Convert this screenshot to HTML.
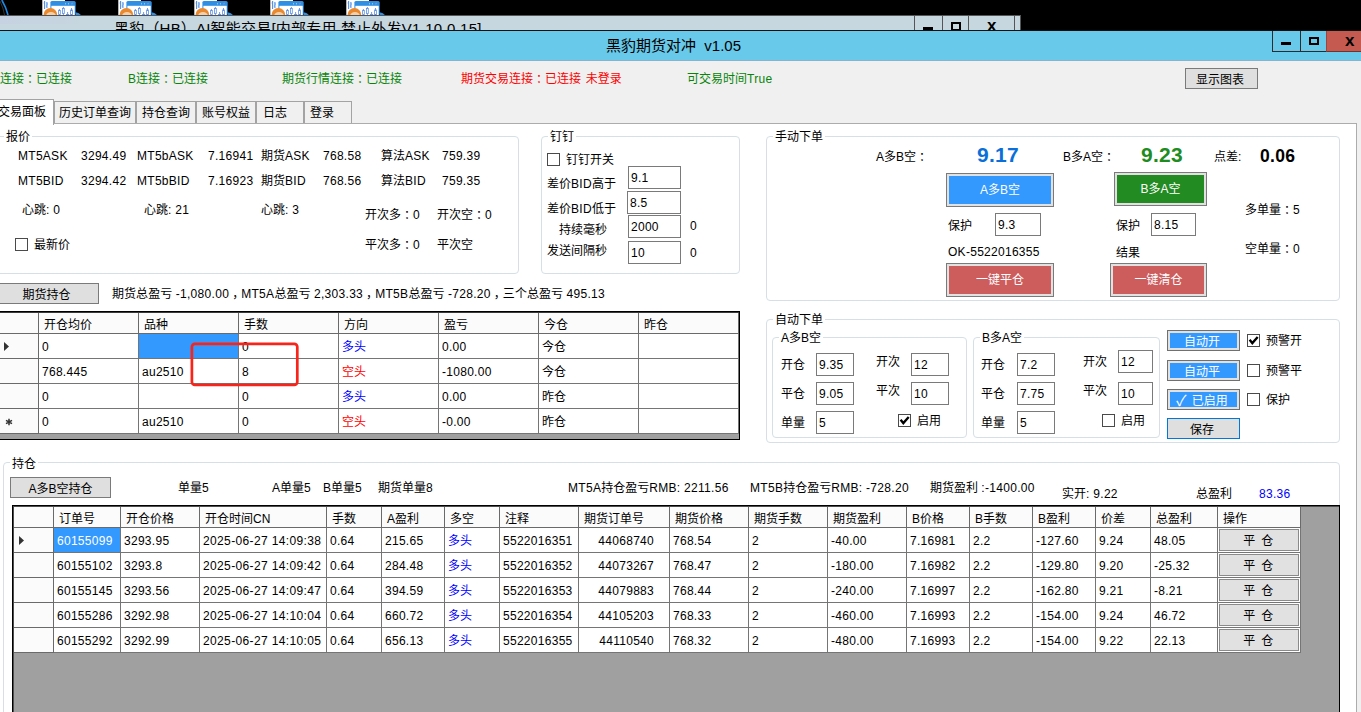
<!DOCTYPE html><html lang="zh"><head><meta charset="utf-8"><title>黑豹期货对冲 v1.05</title><style>
*{box-sizing:border-box;margin:0;padding:0}
html,body{width:1361px;height:712px;overflow:hidden;background:#000}
body{position:relative;font-family:"Liberation Sans","Noto Sans CJK SC",sans-serif;font-size:12px;color:#000;line-height:16px}
.a{position:absolute}
.t{position:absolute;white-space:nowrap;height:19px;line-height:19px}
.g{color:#088508}
.r{color:#ff0000}
.bl{color:#0000ff}
.gb{position:absolute;border:1px solid #d5dfe5;border-radius:4px}
.gl{position:absolute;background:#fff;padding:0 2px;white-space:nowrap;height:16px;line-height:19px}
.tb{position:absolute;border:1px solid #7a7a7a;background:#fff;height:22px;line-height:21px;padding-left:2px;padding-top:1px;white-space:nowrap;overflow:hidden}
.cb{position:absolute;width:13px;height:13px;border:1px solid #4a4a4a;background:#fff}
.btn{position:absolute;border:1px solid #7a7a7a;background:#dfdfdf;text-align:center;white-space:nowrap}
.tab{position:absolute;top:101px;height:22px;border:1px solid #a3a3a3;border-bottom:none;background:#f0f0f0;line-height:23px;text-align:center;white-space:nowrap}
.n{letter-spacing:0.3px}
.cm{position:relative;left:3px}
.c{font-family:"Noto Sans CJK TC",sans-serif;line-height:0;position:relative;top:1px}
.cell{position:absolute;background:#fff;border-right:1px solid #757575;border-bottom:1px solid #757575;white-space:nowrap;overflow:hidden;padding-left:3px}
.hc{position:absolute;background:#fbfbfb;border-right:1px solid #6a6a6a;border-bottom:1px solid #6a6a6a;white-space:nowrap;overflow:hidden;padding-left:3px}
</style></head><body>
<svg class="a" style="left:42px;top:0" width="40" height="15" viewBox="0 0 40 15"><rect x="0.3" y="0" width="22.7" height="15" fill="#fff"/><path d="M2.6 1v8M4.9 2v6" stroke="#4d8fe6" stroke-width="1.1" fill="none"/><path d="M1.6 3h1M4.9 4h1M3.9 6h1" stroke="#4d8fe6" stroke-width="0.8" fill="none"/><rect x="8.4" y="1.1" width="25.3" height="14" rx="1.5" fill="#2e8fe3"/><rect x="9.4" y="5.8" width="23.3" height="10" fill="#fff"/><path d="M17.4 9v6M21.4 7v8M25.6 12v3M29.5 8v7" stroke="#5a8eea" stroke-width="0.9" fill="none"/><rect x="16.6" y="10.5" width="1.7" height="4" fill="#fff" stroke="#5a8eea" stroke-width="0.8"/><rect x="20.5" y="8.5" width="1.8" height="5" fill="#fff" stroke="#5a8eea" stroke-width="0.8"/><rect x="28.6" y="10" width="1.8" height="5" fill="#fff" stroke="#5a8eea" stroke-width="0.8"/><path d="M24 14.5h3.2" stroke="#5a8eea" stroke-width="0.9"/><circle cx="8.4" cy="14.8" r="6.8" fill="#e8892f"/><ellipse cx="9" cy="16.5" rx="5" ry="4.5" fill="#f7cfa6"/><path d="M23 4.3l1-1.6v1.6zM26 4.3l1-1.6v1.6z" fill="#fff" opacity="0.9"/><path d="M29.3 4.3l1-1.8v1.8z" fill="#f9a" /><path d="M33.7 15v-2.5q3 -0.5 5.2 2.5z" fill="#2e8fe3"/></svg>
<svg class="a" style="left:118px;top:0" width="40" height="15" viewBox="0 0 40 15"><rect x="0.3" y="0" width="22.7" height="15" fill="#fff"/><path d="M2.6 1v8M4.9 2v6" stroke="#4d8fe6" stroke-width="1.1" fill="none"/><path d="M1.6 3h1M4.9 4h1M3.9 6h1" stroke="#4d8fe6" stroke-width="0.8" fill="none"/><rect x="8.4" y="1.1" width="25.3" height="14" rx="1.5" fill="#2e8fe3"/><rect x="9.4" y="5.8" width="23.3" height="10" fill="#fff"/><path d="M17.4 9v6M21.4 7v8M25.6 12v3M29.5 8v7" stroke="#5a8eea" stroke-width="0.9" fill="none"/><rect x="16.6" y="10.5" width="1.7" height="4" fill="#fff" stroke="#5a8eea" stroke-width="0.8"/><rect x="20.5" y="8.5" width="1.8" height="5" fill="#fff" stroke="#5a8eea" stroke-width="0.8"/><rect x="28.6" y="10" width="1.8" height="5" fill="#fff" stroke="#5a8eea" stroke-width="0.8"/><path d="M24 14.5h3.2" stroke="#5a8eea" stroke-width="0.9"/><circle cx="8.4" cy="14.8" r="6.8" fill="#e8892f"/><ellipse cx="9" cy="16.5" rx="5" ry="4.5" fill="#f7cfa6"/><path d="M23 4.3l1-1.6v1.6zM26 4.3l1-1.6v1.6z" fill="#fff" opacity="0.9"/><path d="M29.3 4.3l1-1.8v1.8z" fill="#f9a" /><path d="M33.7 15v-2.5q3 -0.5 5.2 2.5z" fill="#2e8fe3"/></svg>
<svg class="a" style="left:194px;top:0" width="40" height="15" viewBox="0 0 40 15"><rect x="0.3" y="0" width="22.7" height="15" fill="#fff"/><path d="M2.6 1v8M4.9 2v6" stroke="#4d8fe6" stroke-width="1.1" fill="none"/><path d="M1.6 3h1M4.9 4h1M3.9 6h1" stroke="#4d8fe6" stroke-width="0.8" fill="none"/><rect x="8.4" y="1.1" width="25.3" height="14" rx="1.5" fill="#2e8fe3"/><rect x="9.4" y="5.8" width="23.3" height="10" fill="#fff"/><path d="M17.4 9v6M21.4 7v8M25.6 12v3M29.5 8v7" stroke="#5a8eea" stroke-width="0.9" fill="none"/><rect x="16.6" y="10.5" width="1.7" height="4" fill="#fff" stroke="#5a8eea" stroke-width="0.8"/><rect x="20.5" y="8.5" width="1.8" height="5" fill="#fff" stroke="#5a8eea" stroke-width="0.8"/><rect x="28.6" y="10" width="1.8" height="5" fill="#fff" stroke="#5a8eea" stroke-width="0.8"/><path d="M24 14.5h3.2" stroke="#5a8eea" stroke-width="0.9"/><circle cx="8.4" cy="14.8" r="6.8" fill="#e8892f"/><ellipse cx="9" cy="16.5" rx="5" ry="4.5" fill="#f7cfa6"/><path d="M23 4.3l1-1.6v1.6zM26 4.3l1-1.6v1.6z" fill="#fff" opacity="0.9"/><path d="M29.3 4.3l1-1.8v1.8z" fill="#f9a" /><path d="M33.7 15v-2.5q3 -0.5 5.2 2.5z" fill="#2e8fe3"/></svg>
<svg class="a" style="left:270px;top:0" width="40" height="15" viewBox="0 0 40 15"><rect x="0.3" y="0" width="22.7" height="15" fill="#fff"/><path d="M2.6 1v8M4.9 2v6" stroke="#4d8fe6" stroke-width="1.1" fill="none"/><path d="M1.6 3h1M4.9 4h1M3.9 6h1" stroke="#4d8fe6" stroke-width="0.8" fill="none"/><rect x="8.4" y="1.1" width="25.3" height="14" rx="1.5" fill="#2e8fe3"/><rect x="9.4" y="5.8" width="23.3" height="10" fill="#fff"/><path d="M17.4 9v6M21.4 7v8M25.6 12v3M29.5 8v7" stroke="#5a8eea" stroke-width="0.9" fill="none"/><rect x="16.6" y="10.5" width="1.7" height="4" fill="#fff" stroke="#5a8eea" stroke-width="0.8"/><rect x="20.5" y="8.5" width="1.8" height="5" fill="#fff" stroke="#5a8eea" stroke-width="0.8"/><rect x="28.6" y="10" width="1.8" height="5" fill="#fff" stroke="#5a8eea" stroke-width="0.8"/><path d="M24 14.5h3.2" stroke="#5a8eea" stroke-width="0.9"/><circle cx="8.4" cy="14.8" r="6.8" fill="#e8892f"/><ellipse cx="9" cy="16.5" rx="5" ry="4.5" fill="#f7cfa6"/><path d="M23 4.3l1-1.6v1.6zM26 4.3l1-1.6v1.6z" fill="#fff" opacity="0.9"/><path d="M29.3 4.3l1-1.8v1.8z" fill="#f9a" /><path d="M33.7 15v-2.5q3 -0.5 5.2 2.5z" fill="#2e8fe3"/></svg>
<svg class="a" style="left:346px;top:0" width="40" height="15" viewBox="0 0 40 15"><rect x="0.3" y="0" width="22.7" height="15" fill="#fff"/><path d="M2.6 1v8M4.9 2v6" stroke="#4d8fe6" stroke-width="1.1" fill="none"/><path d="M1.6 3h1M4.9 4h1M3.9 6h1" stroke="#4d8fe6" stroke-width="0.8" fill="none"/><rect x="8.4" y="1.1" width="25.3" height="14" rx="1.5" fill="#2e8fe3"/><rect x="9.4" y="5.8" width="23.3" height="10" fill="#fff"/><path d="M17.4 9v6M21.4 7v8M25.6 12v3M29.5 8v7" stroke="#5a8eea" stroke-width="0.9" fill="none"/><rect x="16.6" y="10.5" width="1.7" height="4" fill="#fff" stroke="#5a8eea" stroke-width="0.8"/><rect x="20.5" y="8.5" width="1.8" height="5" fill="#fff" stroke="#5a8eea" stroke-width="0.8"/><rect x="28.6" y="10" width="1.8" height="5" fill="#fff" stroke="#5a8eea" stroke-width="0.8"/><path d="M24 14.5h3.2" stroke="#5a8eea" stroke-width="0.9"/><circle cx="8.4" cy="14.8" r="6.8" fill="#e8892f"/><ellipse cx="9" cy="16.5" rx="5" ry="4.5" fill="#f7cfa6"/><path d="M23 4.3l1-1.6v1.6zM26 4.3l1-1.6v1.6z" fill="#fff" opacity="0.9"/><path d="M29.3 4.3l1-1.8v1.8z" fill="#f9a" /><path d="M33.7 15v-2.5q3 -0.5 5.2 2.5z" fill="#2e8fe3"/></svg>
<svg class="a" style="left:0;top:0" width="12" height="15"><path d="M1.8 0 Q6 7 8 15" stroke="#1e8ae6" stroke-width="1.6" fill="none"/><path d="M0 1 Q3.5 8 4.5 15" stroke="#555" stroke-width="0.6" fill="none"/></svg>
<div class="a" style="left:0;top:15px;width:1021px;height:16px;background:#c6d7df;border-top:1px solid #555;border-right:1px solid #555;overflow:hidden">
<div class="a" style="left:0;top:0;width:80px;height:8px;background:linear-gradient(90deg,#c6d2e1,#c6d4e0 80%,#c6d7df)"></div>
<div class="t" style="left:114px;top:3px;font-size:15px;line-height:20px;height:20px;letter-spacing:0.2px;color:#000">黑豹（HB）AI智能交易[内部专用 禁止外发<span class="n">V1.10.0.15]</span></div>
<div class="a" style="left:914px;top:0;width:1px;height:20px;background:#555"></div>
<div class="a" style="left:942px;top:0;width:1px;height:20px;background:#555"></div>
<div class="a" style="left:968px;top:0;width:1px;height:20px;background:#555"></div>
<div class="a" style="left:1014px;top:0;width:1px;height:20px;background:#555"></div>
<div class="a" style="left:923px;top:11px;width:10px;height:4px;background:#000"></div>
<div class="a" style="left:951px;top:6px;width:10px;height:9px;border:2px solid #000"></div>
<div class="t" style="left:987px;top:1px;font-size:17px;font-weight:bold;line-height:18px;height:18px">x</div>
</div>
<div class="a" style="left:0;top:30px;width:1361px;height:31px;background:#68c9ea;border-top:1px solid #111"></div>
<div class="t" style="left:606px;top:36px;font-size:15px;line-height:20px;height:20px">黑豹期货对冲&nbsp; v1.05</div>
<div class="a" style="left:1272px;top:31px;width:29px;height:21px;border:1px solid #2b2b30;border-top:none"></div>
<div class="a" style="left:1300px;top:31px;width:27px;height:21px;border:1px solid #2b2b30;border-top:none"></div>
<div class="a" style="left:1326px;top:31px;width:35px;height:21px;background:#c55b50;border-bottom:1px solid #70332d;border-left:1px solid #9a463e"></div>
<div class="a" style="left:1281px;top:42px;width:10px;height:3px;background:#000"></div>
<div class="a" style="left:1309px;top:37px;width:10px;height:8px;border:2px solid #000"></div>
<div class="t" style="left:1345px;top:32px;font-size:17px;font-weight:bold;line-height:18px;height:18px">x</div>
<div class="a" style="left:0;top:60px;width:1361px;height:1px;background:#86b4cf"></div>
<div class="a" style="left:0;top:61px;width:1361px;height:651px;background:#f0f0f0"></div>
<div class="t g" style="left:-8px;top:70px">A连接<span class="c" lang="zh-TW">：</span>已连接</div>
<div class="t g" style="left:128px;top:70px">B连接<span class="c" lang="zh-TW">：</span>已连接</div>
<div class="t g" style="left:282px;top:70px">期货行情连接<span class="c" lang="zh-TW">：</span>已连接</div>
<div class="t r" style="left:461px;top:70px;word-spacing:1.5px">期货交易连接<span class="c" lang="zh-TW">：</span>已连接 未登录</div>
<div class="t g" style="left:687px;top:70px">可交易时间<span class="n">True</span></div>
<div class="btn" style="left:1185px;top:68px;width:73px;height:21px;line-height:23px;padding-right:3px">显示图表</div>
<div class="a" style="left:-1px;top:123px;width:1358px;height:600px;background:#fff;border:1px solid #acacac"></div>
<div class="tab" style="left:54px;width:82px">历史订单查询</div>
<div class="tab" style="left:136px;width:60px">持仓查询</div>
<div class="tab" style="left:196px;width:60px">账号权益</div>
<div class="tab" style="left:256px;width:48px;text-align:left;padding-left:6px">日志</div>
<div class="tab" style="left:304px;width:48px;text-align:left;padding-left:5px">登录</div>
<div class="tab" style="left:-12px;top:99px;width:66px;height:26px;background:#fff;line-height:25px;padding-left:9px;text-align:left">交易面板</div>
<div class="gb" style="left:-5px;top:136px;width:524px;height:138px"></div>
<div class="gl" style="left:4px;top:128px">报价</div>
<div class="t" style="letter-spacing:0.28px;left:18px;top:147px">MT5ASK</div>
<div class="t" style="letter-spacing:0.28px;left:81px;top:147px">3294.49</div>
<div class="t" style="letter-spacing:0.28px;left:137px;top:147px">MT5bASK</div>
<div class="t" style="letter-spacing:0.28px;left:208px;top:147px">7.16941</div>
<div class="t" style="left:261px;top:147px">期货<span class="n">ASK</span></div>
<div class="t" style="letter-spacing:0.28px;left:323px;top:147px">768.58</div>
<div class="t" style="left:381px;top:147px">算法<span class="n">ASK</span></div>
<div class="t" style="letter-spacing:0.28px;left:442px;top:147px">759.39</div>
<div class="t" style="letter-spacing:0.28px;left:18px;top:172px">MT5BID</div>
<div class="t" style="letter-spacing:0.28px;left:81px;top:172px">3294.42</div>
<div class="t" style="letter-spacing:0.28px;left:137px;top:172px">MT5bBID</div>
<div class="t" style="letter-spacing:0.28px;left:208px;top:172px">7.16923</div>
<div class="t" style="left:261px;top:172px">期货<span class="n">BID</span></div>
<div class="t" style="letter-spacing:0.28px;left:323px;top:172px">768.56</div>
<div class="t" style="left:381px;top:172px">算法<span class="n">BID</span></div>
<div class="t" style="letter-spacing:0.28px;left:442px;top:172px">759.35</div>
<div class="t" style="left:22px;top:201px">心跳<span class="n">: 0</span></div>
<div class="t" style="left:144px;top:201px">心跳<span class="n">: 21</span></div>
<div class="t" style="left:261px;top:201px">心跳<span class="n">: 3</span></div>
<div class="t" style="left:365px;top:206px">开次多<span class="c" lang="zh-TW">：</span>0</div>
<div class="t" style="left:437px;top:206px">开次空<span class="c" lang="zh-TW">：</span>0</div>
<div class="t" style="left:365px;top:236px">平次多<span class="c" lang="zh-TW">：</span>0</div>
<div class="t" style="left:437px;top:236px">平次空</div>
<div class="cb" style="left:15px;top:238px"></div>
<div class="t" style="left:34px;top:236px">最新价</div>
<div class="gb" style="left:541px;top:136px;width:199px;height:138px"></div>
<div class="gl" style="left:548px;top:128px">钉钉</div>
<div class="cb" style="left:547px;top:153px"></div>
<div class="t" style="left:566px;top:151px">钉钉开关</div>
<div class="t" style="left:547px;top:175px">差价<span class="n">BID</span>高于</div>
<div class="t" style="left:547px;top:200px">差价<span class="n">BID</span>低于</div>
<div class="t" style="left:559px;top:221px">持续毫秒</div>
<div class="t" style="left:547px;top:242px">发送间隔秒</div>
<div class="tb" style="letter-spacing:0.28px;left:628px;top:166px;width:53px;height:23px">9.1</div>
<div class="tb" style="letter-spacing:0.28px;left:627px;top:191px;width:54px;height:23px">8.5</div>
<div class="tb" style="letter-spacing:0.28px;left:628px;top:215px;width:53px;height:23px">2000</div>
<div class="tb" style="letter-spacing:0.28px;left:628px;top:241px;width:53px;height:23px">10</div>
<div class="t" style="left:690px;top:217px">0</div>
<div class="t" style="left:690px;top:244px">0</div>
<div class="btn" style="left:-6px;top:283px;width:105px;height:21px;line-height:23px">期货持仓</div>
<div class="t" style="left:112px;top:285px;letter-spacing:0.06px">期货总盈亏 <span class="n">-1,080.00</span><span class="cm">，</span><span class="n">MT5A</span>总盈亏 <span class="n">2,303.33</span><span class="cm">，</span><span class="n">MT5B</span>总盈亏 <span class="n">-728.20</span><span class="cm">，</span>三个总盈亏 <span class="n">495.13</span></div>
<div class="a" style="left:-1px;top:311px;width:741px;height:129px;background:#a0a0a0;border:1px solid #000;box-shadow:inset 0 1px 0 #3a3a3a"></div>
<div class="hc" style="left:0px;top:313px;width:39px;height:21px;line-height:24px;padding-left:5px"></div>
<div class="hc" style="left:39px;top:313px;width:100px;height:21px;line-height:24px;padding-left:5px">开仓均价</div>
<div class="hc" style="left:139px;top:313px;width:100px;height:21px;line-height:24px;padding-left:5px">品种</div>
<div class="hc" style="left:239px;top:313px;width:100px;height:21px;line-height:24px;padding-left:5px">手数</div>
<div class="hc" style="left:339px;top:313px;width:100px;height:21px;line-height:24px;padding-left:5px">方向</div>
<div class="hc" style="left:439px;top:313px;width:100px;height:21px;line-height:24px;padding-left:5px">盈亏</div>
<div class="hc" style="left:539px;top:313px;width:100px;height:21px;line-height:24px;padding-left:5px">今仓</div>
<div class="hc" style="left:639px;top:313px;width:100px;height:21px;line-height:24px;padding-left:5px">昨仓</div>
<div class="hc" style="left:0;top:334px;width:39px;height:25px"></div>
<div class="cell" style="left:39px;top:334px;width:100px;height:25px;line-height:26px">0</div>
<div class="cell" style="left:139px;top:334px;width:100px;height:25px;line-height:26px;background:#3399ff"></div>
<div class="cell" style="left:239px;top:334px;width:100px;height:25px;line-height:26px">0</div>
<div class="cell bl" style="left:339px;top:334px;width:100px;height:25px;line-height:26px">多头</div>
<div class="cell" style="letter-spacing:0.28px;left:439px;top:334px;width:100px;height:25px;line-height:26px">0.00</div>
<div class="cell" style="left:539px;top:334px;width:100px;height:25px;line-height:26px">今仓</div>
<div class="cell" style="left:639px;top:334px;width:100px;height:25px;line-height:26px"></div>
<div class="hc" style="left:0;top:359px;width:39px;height:25px"></div>
<div class="cell" style="letter-spacing:0.28px;left:39px;top:359px;width:100px;height:25px;line-height:26px">768.445</div>
<div class="cell" style="letter-spacing:0.28px;left:139px;top:359px;width:100px;height:25px;line-height:26px">au2510</div>
<div class="cell" style="left:239px;top:359px;width:100px;height:25px;line-height:26px">8</div>
<div class="cell r" style="left:339px;top:359px;width:100px;height:25px;line-height:26px">空头</div>
<div class="cell" style="letter-spacing:0.28px;left:439px;top:359px;width:100px;height:25px;line-height:26px">-1080.00</div>
<div class="cell" style="left:539px;top:359px;width:100px;height:25px;line-height:26px">今仓</div>
<div class="cell" style="left:639px;top:359px;width:100px;height:25px;line-height:26px"></div>
<div class="hc" style="left:0;top:384px;width:39px;height:25px"></div>
<div class="cell" style="left:39px;top:384px;width:100px;height:25px;line-height:26px">0</div>
<div class="cell" style="left:139px;top:384px;width:100px;height:25px;line-height:26px"></div>
<div class="cell" style="left:239px;top:384px;width:100px;height:25px;line-height:26px">0</div>
<div class="cell bl" style="left:339px;top:384px;width:100px;height:25px;line-height:26px">多头</div>
<div class="cell" style="letter-spacing:0.28px;left:439px;top:384px;width:100px;height:25px;line-height:26px">0.00</div>
<div class="cell" style="left:539px;top:384px;width:100px;height:25px;line-height:26px">昨仓</div>
<div class="cell" style="left:639px;top:384px;width:100px;height:25px;line-height:26px"></div>
<div class="hc" style="left:0;top:409px;width:39px;height:25px"></div>
<div class="cell" style="left:39px;top:409px;width:100px;height:25px;line-height:26px">0</div>
<div class="cell" style="letter-spacing:0.28px;left:139px;top:409px;width:100px;height:25px;line-height:26px">au2510</div>
<div class="cell" style="left:239px;top:409px;width:100px;height:25px;line-height:26px">0</div>
<div class="cell r" style="left:339px;top:409px;width:100px;height:25px;line-height:26px">空头</div>
<div class="cell" style="letter-spacing:0.28px;left:439px;top:409px;width:100px;height:25px;line-height:26px">-0.00</div>
<div class="cell" style="left:539px;top:409px;width:100px;height:25px;line-height:26px">昨仓</div>
<div class="cell" style="left:639px;top:409px;width:100px;height:25px;line-height:26px"></div>
<svg class="a" style="left:4px;top:342px" width="8" height="10"><path d="M0 0L5 4.5L0 9Z" fill="#333"/></svg>
<svg class="a" style="left:5px;top:418px" width="8" height="8"><path d="M4 0.8v6.4M1 2.3l6 3.4M7 2.3l-6 3.4" stroke="#333" stroke-width="1.5" fill="none"/></svg>
<svg class="a" style="left:188px;top:340px" width="114" height="50"><rect x="3.9" y="3.8" width="105.4" height="41.2" rx="3" fill="none" stroke="#f8241a" stroke-width="2.7"/></svg>
<div class="gb" style="left:766px;top:136px;width:574px;height:165px"></div>
<div class="gl" style="left:773px;top:128px">手动下单</div>
<div class="t" style="left:876px;top:148px">A多B空<span class="c" lang="zh-TW">：</span></div>
<div class="t" style="letter-spacing:0.28px;left:977px;top:144px;font-size:21px;font-weight:bold;color:#0a6fd8;line-height:22px;height:22px">9.17</div>
<div class="t" style="left:1063px;top:148px">B多A空<span class="c" lang="zh-TW">：</span></div>
<div class="t" style="letter-spacing:0.28px;left:1141px;top:144px;font-size:21px;font-weight:bold;color:#1e8c1e;line-height:22px;height:22px">9.23</div>
<div class="t" style="left:1214px;top:148px">点差:</div>
<div class="t" style="letter-spacing:0.28px;left:1260px;top:146px;font-size:17.5px;font-weight:bold;line-height:20px;height:20px">0.06</div>
<div class="a" style="left:946px;top:173px;width:108px;height:34px;border:1px solid #7a7a7a;background:#e1e1e1;padding:2px"><div style="width:100%;height:100%;background:#3399ff;color:#fff;text-align:center;line-height:28px">A多B空</div></div>
<div class="a" style="left:1114px;top:172px;width:93px;height:34px;border:1px solid #7a7a7a;background:#e1e1e1;padding:2px"><div style="width:100%;height:100%;background:#228b22;color:#fff;text-align:center;line-height:28px">B多A空</div></div>
<div class="a" style="left:946px;top:263px;width:108px;height:34px;border:1px solid #7a7a7a;background:#e1e1e1;padding:2px"><div style="width:100%;height:100%;background:#cd5c5c;color:#fff;text-align:center;line-height:28px">一键平仓</div></div>
<div class="a" style="left:1110px;top:263px;width:97px;height:34px;border:1px solid #7a7a7a;background:#e1e1e1;padding:2px"><div style="width:100%;height:100%;background:#cd5c5c;color:#fff;text-align:center;line-height:28px">一键清仓</div></div>
<div class="t" style="left:948px;top:217px">保护</div>
<div class="tb" style="letter-spacing:0.28px;left:995px;top:213px;width:46px;height:23px">9.3</div>
<div class="t" style="left:1116px;top:217px">保护</div>
<div class="tb" style="letter-spacing:0.28px;left:1151px;top:213px;width:45px;height:23px">8.15</div>
<div class="t" style="letter-spacing:0.28px;left:948px;top:243px">OK-5522016355</div>
<div class="t" style="left:1116px;top:244px">结果</div>
<div class="t" style="left:1245px;top:201px">多单量<span class="c" lang="zh-TW">：</span>5</div>
<div class="t" style="left:1245px;top:240px">空单量<span class="c" lang="zh-TW">：</span>0</div>
<div class="gb" style="left:766px;top:319px;width:574px;height:124px"></div>
<div class="gl" style="left:773px;top:311px">自动下单</div>
<div class="gb" style="left:772px;top:337px;width:195px;height:101px"></div>
<div class="gl" style="left:779px;top:329px">A多B空</div>
<div class="gb" style="left:973px;top:337px;width:187px;height:101px"></div>
<div class="gl" style="left:980px;top:329px">B多A空</div>
<div class="t" style="left:781px;top:356px">开仓</div>
<div class="tb" style="letter-spacing:0.28px;left:816px;top:353px;width:38px;height:23px">9.35</div>
<div class="t" style="left:781px;top:385px">平仓</div>
<div class="tb" style="letter-spacing:0.28px;left:816px;top:382px;width:38px;height:23px">9.05</div>
<div class="t" style="left:781px;top:414px">单量</div>
<div class="tb" style="left:816px;top:411px;width:38px;height:23px">5</div>
<div class="t" style="left:876px;top:353px">开次</div>
<div class="tb" style="letter-spacing:0.28px;left:911px;top:353px;width:38px;height:23px">12</div>
<div class="t" style="left:876px;top:382px">平次</div>
<div class="tb" style="letter-spacing:0.28px;left:911px;top:382px;width:38px;height:23px">10</div>
<div class="cb" style="left:898px;top:414px"></div>
<svg class="a" style="left:898px;top:414px" width="13" height="13"><path d="M2.6 5.8L5.3 9.1L10.7 2.9" stroke="#000" stroke-width="2.3" fill="none"/></svg>
<div class="t" style="left:917px;top:412px">启用</div>
<div class="t" style="left:981px;top:356px">开仓</div>
<div class="tb" style="letter-spacing:0.28px;left:1017px;top:353px;width:38px;height:23px">7.2</div>
<div class="t" style="left:981px;top:385px">平仓</div>
<div class="tb" style="letter-spacing:0.28px;left:1017px;top:382px;width:38px;height:23px">7.75</div>
<div class="t" style="left:981px;top:414px">单量</div>
<div class="tb" style="left:1017px;top:411px;width:38px;height:23px">5</div>
<div class="t" style="left:1083px;top:353px">开次</div>
<div class="tb" style="letter-spacing:0.28px;left:1118px;top:350px;width:35px;height:23px">12</div>
<div class="t" style="left:1083px;top:382px">平次</div>
<div class="tb" style="letter-spacing:0.28px;left:1118px;top:382px;width:35px;height:23px">10</div>
<div class="cb" style="left:1102px;top:414px"></div>
<div class="t" style="left:1121px;top:412px">启用</div>
<div class="a" style="left:1167px;top:330px;width:73px;height:21px;border:1px solid #707070;background:#e1e1e1;padding:2px"><div style="width:100%;height:100%;background:#3399ff;color:#fff;text-align:center;line-height:18px;padding-right:3px;white-space:nowrap;overflow:hidden">自动开</div></div>
<div class="a" style="left:1167px;top:360px;width:73px;height:21px;border:1px solid #707070;background:#e1e1e1;padding:2px"><div style="width:100%;height:100%;background:#3399ff;color:#fff;text-align:center;line-height:18px;padding-right:3px;white-space:nowrap;overflow:hidden">自动平</div></div>
<div class="a" style="left:1167px;top:389px;width:73px;height:21px;border:1px solid #707070;background:#e1e1e1;padding:2px"><div style="width:100%;height:100%;background:#3399ff;color:#fff;text-align:center;line-height:18px;padding-right:3px;white-space:nowrap;overflow:hidden"><span style="font-size:15px;line-height:0;position:relative;top:1px;margin-right:2px">✓</span> 已启用</div></div>
<div class="btn" style="left:1167px;top:418px;width:73px;height:21px;line-height:23px;padding-right:3px;border-color:#0078d7">保存</div>
<div class="cb" style="left:1247px;top:334px"></div>
<svg class="a" style="left:1247px;top:334px" width="13" height="13"><path d="M2.6 5.8L5.3 9.1L10.7 2.9" stroke="#000" stroke-width="2.3" fill="none"/></svg>
<div class="t" style="left:1266px;top:332px">预警开</div>
<div class="cb" style="left:1247px;top:364px"></div>
<div class="t" style="left:1266px;top:362px">预警平</div>
<div class="cb" style="left:1247px;top:393px"></div>
<div class="t" style="left:1266px;top:391px">保护</div>
<div class="gb" style="left:3px;top:462px;width:1337px;height:260px"></div>
<div class="gl" style="left:10px;top:455px">持仓</div>
<div class="btn" style="left:10px;top:477px;width:101px;height:21px;line-height:23px">A多B空持仓</div>
<div class="t" style="left:178px;top:479px">单量5</div>
<div class="t" style="left:272px;top:479px">A单量5</div>
<div class="t" style="left:323px;top:479px">B单量5</div>
<div class="t" style="left:378px;top:479px">期货单量8</div>
<div class="t" style="left:568px;top:479px"><span class="n">MT5A</span>持仓盈亏<span class="n">RMB: 2211.56</span></div>
<div class="t" style="left:750px;top:479px"><span class="n">MT5B</span>持仓盈亏<span class="n">RMB: -728.20</span></div>
<div class="t" style="left:930px;top:479px">期货盈利 <span class="n">:-1400.00</span></div>
<div class="t" style="left:1062px;top:485px">实开<span class="n">: 9.22</span></div>
<div class="t" style="left:1196px;top:485px">总盈利</div>
<div class="t bl" style="letter-spacing:0.28px;left:1259px;top:485px">83.36</div>
<div class="a" style="left:12px;top:505px;width:1328px;height:220px;background:#a0a0a0;border:1px solid #000;box-shadow:inset 1px 1px 0 #4d4d4d"></div>
<div class="hc" style="left:14px;top:507px;width:40px;height:21px;line-height:24px;padding-left:5px"></div>
<div class="hc" style="left:54px;top:507px;width:67px;height:21px;line-height:24px;padding-left:5px">订单号</div>
<div class="hc" style="left:121px;top:507px;width:79px;height:21px;line-height:24px;padding-left:5px">开仓价格</div>
<div class="hc" style="left:200px;top:507px;width:127px;height:21px;line-height:24px;padding-left:5px">开仓时间CN</div>
<div class="hc" style="left:327px;top:507px;width:55px;height:21px;line-height:24px;padding-left:5px">手数</div>
<div class="hc" style="left:382px;top:507px;width:63px;height:21px;line-height:24px;padding-left:5px">A盈利</div>
<div class="hc" style="left:445px;top:507px;width:55px;height:21px;line-height:24px;padding-left:5px">多空</div>
<div class="hc" style="left:500px;top:507px;width:79px;height:21px;line-height:24px;padding-left:5px">注释</div>
<div class="hc" style="left:579px;top:507px;width:91px;height:21px;line-height:24px;padding-left:5px">期货订单号</div>
<div class="hc" style="left:670px;top:507px;width:79px;height:21px;line-height:24px;padding-left:5px">期货价格</div>
<div class="hc" style="left:749px;top:507px;width:79px;height:21px;line-height:24px;padding-left:5px">期货手数</div>
<div class="hc" style="left:828px;top:507px;width:79px;height:21px;line-height:24px;padding-left:5px">期货盈利</div>
<div class="hc" style="left:907px;top:507px;width:63px;height:21px;line-height:24px;padding-left:5px">B价格</div>
<div class="hc" style="left:970px;top:507px;width:63px;height:21px;line-height:24px;padding-left:5px">B手数</div>
<div class="hc" style="left:1033px;top:507px;width:63px;height:21px;line-height:24px;padding-left:5px">B盈利</div>
<div class="hc" style="left:1096px;top:507px;width:55px;height:21px;line-height:24px;padding-left:5px">价差</div>
<div class="hc" style="left:1151px;top:507px;width:67px;height:21px;line-height:24px;padding-left:5px">总盈利</div>
<div class="hc" style="left:1218px;top:507px;width:83px;height:21px;line-height:24px;padding-left:5px">操作</div>
<div class="hc" style="left:14px;top:528px;width:40px;height:25px"></div>
<div class="cell" style="letter-spacing:0.28px;left:54px;top:528px;width:67px;height:25px;line-height:26px;background:#3399ff;color:#fff">60155099</div>
<div class="cell" style="letter-spacing:0.28px;left:121px;top:528px;width:79px;height:25px;line-height:26px">3293.95</div>
<div class="cell" style="letter-spacing:0.28px;left:200px;top:528px;width:127px;height:25px;line-height:26px;letter-spacing:0.36px">2025-06-27 14:09:38</div>
<div class="cell" style="letter-spacing:0.28px;left:327px;top:528px;width:55px;height:25px;line-height:26px">0.64</div>
<div class="cell" style="letter-spacing:0.28px;left:382px;top:528px;width:63px;height:25px;line-height:26px">215.65</div>
<div class="cell bl" style="left:445px;top:528px;width:55px;height:25px;line-height:26px">多头</div>
<div class="cell" style="letter-spacing:0.28px;left:500px;top:528px;width:79px;height:25px;line-height:26px">5522016351</div>
<div class="cell" style="letter-spacing:0.28px;left:579px;top:528px;width:91px;height:25px;line-height:26px;text-align:right;padding-right:15px">44068740</div>
<div class="cell" style="letter-spacing:0.28px;left:670px;top:528px;width:79px;height:25px;line-height:26px">768.54</div>
<div class="cell" style="left:749px;top:528px;width:79px;height:25px;line-height:26px">2</div>
<div class="cell" style="letter-spacing:0.28px;left:828px;top:528px;width:79px;height:25px;line-height:26px">-40.00</div>
<div class="cell" style="letter-spacing:0.28px;left:907px;top:528px;width:63px;height:25px;line-height:26px">7.16981</div>
<div class="cell" style="letter-spacing:0.28px;left:970px;top:528px;width:63px;height:25px;line-height:26px">2.2</div>
<div class="cell" style="letter-spacing:0.28px;left:1033px;top:528px;width:63px;height:25px;line-height:26px">-127.60</div>
<div class="cell" style="letter-spacing:0.28px;left:1096px;top:528px;width:55px;height:25px;line-height:26px">9.24</div>
<div class="cell" style="letter-spacing:0.28px;left:1151px;top:528px;width:67px;height:25px;line-height:26px">48.05</div>
<div class="cell" style="left:1218px;top:528px;width:83px;height:25px;padding:0"><div style="position:absolute;left:1px;top:1px;width:80px;height:22px;border:1px solid #8a8a8a;background:#e1e1e1;text-align:center;line-height:22px;letter-spacing:1.4px">平 仓</div></div>
<div class="hc" style="left:14px;top:553px;width:40px;height:25px"></div>
<div class="cell" style="letter-spacing:0.28px;left:54px;top:553px;width:67px;height:25px;line-height:26px">60155102</div>
<div class="cell" style="letter-spacing:0.28px;left:121px;top:553px;width:79px;height:25px;line-height:26px">3293.8</div>
<div class="cell" style="letter-spacing:0.28px;left:200px;top:553px;width:127px;height:25px;line-height:26px;letter-spacing:0.36px">2025-06-27 14:09:42</div>
<div class="cell" style="letter-spacing:0.28px;left:327px;top:553px;width:55px;height:25px;line-height:26px">0.64</div>
<div class="cell" style="letter-spacing:0.28px;left:382px;top:553px;width:63px;height:25px;line-height:26px">284.48</div>
<div class="cell bl" style="left:445px;top:553px;width:55px;height:25px;line-height:26px">多头</div>
<div class="cell" style="letter-spacing:0.28px;left:500px;top:553px;width:79px;height:25px;line-height:26px">5522016352</div>
<div class="cell" style="letter-spacing:0.28px;left:579px;top:553px;width:91px;height:25px;line-height:26px;text-align:right;padding-right:15px">44073267</div>
<div class="cell" style="letter-spacing:0.28px;left:670px;top:553px;width:79px;height:25px;line-height:26px">768.47</div>
<div class="cell" style="left:749px;top:553px;width:79px;height:25px;line-height:26px">2</div>
<div class="cell" style="letter-spacing:0.28px;left:828px;top:553px;width:79px;height:25px;line-height:26px">-180.00</div>
<div class="cell" style="letter-spacing:0.28px;left:907px;top:553px;width:63px;height:25px;line-height:26px">7.16982</div>
<div class="cell" style="letter-spacing:0.28px;left:970px;top:553px;width:63px;height:25px;line-height:26px">2.2</div>
<div class="cell" style="letter-spacing:0.28px;left:1033px;top:553px;width:63px;height:25px;line-height:26px">-129.80</div>
<div class="cell" style="letter-spacing:0.28px;left:1096px;top:553px;width:55px;height:25px;line-height:26px">9.20</div>
<div class="cell" style="letter-spacing:0.28px;left:1151px;top:553px;width:67px;height:25px;line-height:26px">-25.32</div>
<div class="cell" style="left:1218px;top:553px;width:83px;height:25px;padding:0"><div style="position:absolute;left:1px;top:1px;width:80px;height:22px;border:1px solid #8a8a8a;background:#e1e1e1;text-align:center;line-height:22px;letter-spacing:1.4px">平 仓</div></div>
<div class="hc" style="left:14px;top:578px;width:40px;height:25px"></div>
<div class="cell" style="letter-spacing:0.28px;left:54px;top:578px;width:67px;height:25px;line-height:26px">60155145</div>
<div class="cell" style="letter-spacing:0.28px;left:121px;top:578px;width:79px;height:25px;line-height:26px">3293.56</div>
<div class="cell" style="letter-spacing:0.28px;left:200px;top:578px;width:127px;height:25px;line-height:26px;letter-spacing:0.36px">2025-06-27 14:09:47</div>
<div class="cell" style="letter-spacing:0.28px;left:327px;top:578px;width:55px;height:25px;line-height:26px">0.64</div>
<div class="cell" style="letter-spacing:0.28px;left:382px;top:578px;width:63px;height:25px;line-height:26px">394.59</div>
<div class="cell bl" style="left:445px;top:578px;width:55px;height:25px;line-height:26px">多头</div>
<div class="cell" style="letter-spacing:0.28px;left:500px;top:578px;width:79px;height:25px;line-height:26px">5522016353</div>
<div class="cell" style="letter-spacing:0.28px;left:579px;top:578px;width:91px;height:25px;line-height:26px;text-align:right;padding-right:15px">44079883</div>
<div class="cell" style="letter-spacing:0.28px;left:670px;top:578px;width:79px;height:25px;line-height:26px">768.44</div>
<div class="cell" style="left:749px;top:578px;width:79px;height:25px;line-height:26px">2</div>
<div class="cell" style="letter-spacing:0.28px;left:828px;top:578px;width:79px;height:25px;line-height:26px">-240.00</div>
<div class="cell" style="letter-spacing:0.28px;left:907px;top:578px;width:63px;height:25px;line-height:26px">7.16997</div>
<div class="cell" style="letter-spacing:0.28px;left:970px;top:578px;width:63px;height:25px;line-height:26px">2.2</div>
<div class="cell" style="letter-spacing:0.28px;left:1033px;top:578px;width:63px;height:25px;line-height:26px">-162.80</div>
<div class="cell" style="letter-spacing:0.28px;left:1096px;top:578px;width:55px;height:25px;line-height:26px">9.21</div>
<div class="cell" style="letter-spacing:0.28px;left:1151px;top:578px;width:67px;height:25px;line-height:26px">-8.21</div>
<div class="cell" style="left:1218px;top:578px;width:83px;height:25px;padding:0"><div style="position:absolute;left:1px;top:1px;width:80px;height:22px;border:1px solid #8a8a8a;background:#e1e1e1;text-align:center;line-height:22px;letter-spacing:1.4px">平 仓</div></div>
<div class="hc" style="left:14px;top:603px;width:40px;height:25px"></div>
<div class="cell" style="letter-spacing:0.28px;left:54px;top:603px;width:67px;height:25px;line-height:26px">60155286</div>
<div class="cell" style="letter-spacing:0.28px;left:121px;top:603px;width:79px;height:25px;line-height:26px">3292.98</div>
<div class="cell" style="letter-spacing:0.28px;left:200px;top:603px;width:127px;height:25px;line-height:26px;letter-spacing:0.36px">2025-06-27 14:10:04</div>
<div class="cell" style="letter-spacing:0.28px;left:327px;top:603px;width:55px;height:25px;line-height:26px">0.64</div>
<div class="cell" style="letter-spacing:0.28px;left:382px;top:603px;width:63px;height:25px;line-height:26px">660.72</div>
<div class="cell bl" style="left:445px;top:603px;width:55px;height:25px;line-height:26px">多头</div>
<div class="cell" style="letter-spacing:0.28px;left:500px;top:603px;width:79px;height:25px;line-height:26px">5522016354</div>
<div class="cell" style="letter-spacing:0.28px;left:579px;top:603px;width:91px;height:25px;line-height:26px;text-align:right;padding-right:15px">44105203</div>
<div class="cell" style="letter-spacing:0.28px;left:670px;top:603px;width:79px;height:25px;line-height:26px">768.33</div>
<div class="cell" style="left:749px;top:603px;width:79px;height:25px;line-height:26px">2</div>
<div class="cell" style="letter-spacing:0.28px;left:828px;top:603px;width:79px;height:25px;line-height:26px">-460.00</div>
<div class="cell" style="letter-spacing:0.28px;left:907px;top:603px;width:63px;height:25px;line-height:26px">7.16993</div>
<div class="cell" style="letter-spacing:0.28px;left:970px;top:603px;width:63px;height:25px;line-height:26px">2.2</div>
<div class="cell" style="letter-spacing:0.28px;left:1033px;top:603px;width:63px;height:25px;line-height:26px">-154.00</div>
<div class="cell" style="letter-spacing:0.28px;left:1096px;top:603px;width:55px;height:25px;line-height:26px">9.24</div>
<div class="cell" style="letter-spacing:0.28px;left:1151px;top:603px;width:67px;height:25px;line-height:26px">46.72</div>
<div class="cell" style="left:1218px;top:603px;width:83px;height:25px;padding:0"><div style="position:absolute;left:1px;top:1px;width:80px;height:22px;border:1px solid #8a8a8a;background:#e1e1e1;text-align:center;line-height:22px;letter-spacing:1.4px">平 仓</div></div>
<div class="hc" style="left:14px;top:628px;width:40px;height:25px"></div>
<div class="cell" style="letter-spacing:0.28px;left:54px;top:628px;width:67px;height:25px;line-height:26px">60155292</div>
<div class="cell" style="letter-spacing:0.28px;left:121px;top:628px;width:79px;height:25px;line-height:26px">3292.99</div>
<div class="cell" style="letter-spacing:0.28px;left:200px;top:628px;width:127px;height:25px;line-height:26px;letter-spacing:0.36px">2025-06-27 14:10:05</div>
<div class="cell" style="letter-spacing:0.28px;left:327px;top:628px;width:55px;height:25px;line-height:26px">0.64</div>
<div class="cell" style="letter-spacing:0.28px;left:382px;top:628px;width:63px;height:25px;line-height:26px">656.13</div>
<div class="cell bl" style="left:445px;top:628px;width:55px;height:25px;line-height:26px">多头</div>
<div class="cell" style="letter-spacing:0.28px;left:500px;top:628px;width:79px;height:25px;line-height:26px">5522016355</div>
<div class="cell" style="letter-spacing:0.28px;left:579px;top:628px;width:91px;height:25px;line-height:26px;text-align:right;padding-right:15px">44110540</div>
<div class="cell" style="letter-spacing:0.28px;left:670px;top:628px;width:79px;height:25px;line-height:26px">768.32</div>
<div class="cell" style="left:749px;top:628px;width:79px;height:25px;line-height:26px">2</div>
<div class="cell" style="letter-spacing:0.28px;left:828px;top:628px;width:79px;height:25px;line-height:26px">-480.00</div>
<div class="cell" style="letter-spacing:0.28px;left:907px;top:628px;width:63px;height:25px;line-height:26px">7.16993</div>
<div class="cell" style="letter-spacing:0.28px;left:970px;top:628px;width:63px;height:25px;line-height:26px">2.2</div>
<div class="cell" style="letter-spacing:0.28px;left:1033px;top:628px;width:63px;height:25px;line-height:26px">-154.00</div>
<div class="cell" style="letter-spacing:0.28px;left:1096px;top:628px;width:55px;height:25px;line-height:26px">9.22</div>
<div class="cell" style="letter-spacing:0.28px;left:1151px;top:628px;width:67px;height:25px;line-height:26px">22.13</div>
<div class="cell" style="left:1218px;top:628px;width:83px;height:25px;padding:0"><div style="position:absolute;left:1px;top:1px;width:80px;height:22px;border:1px solid #8a8a8a;background:#e1e1e1;text-align:center;line-height:22px;letter-spacing:1.4px">平 仓</div></div>
<svg class="a" style="left:19px;top:536px" width="8" height="10"><path d="M0 0L5 4.5L0 9Z" fill="#333"/></svg>
</body></html>
